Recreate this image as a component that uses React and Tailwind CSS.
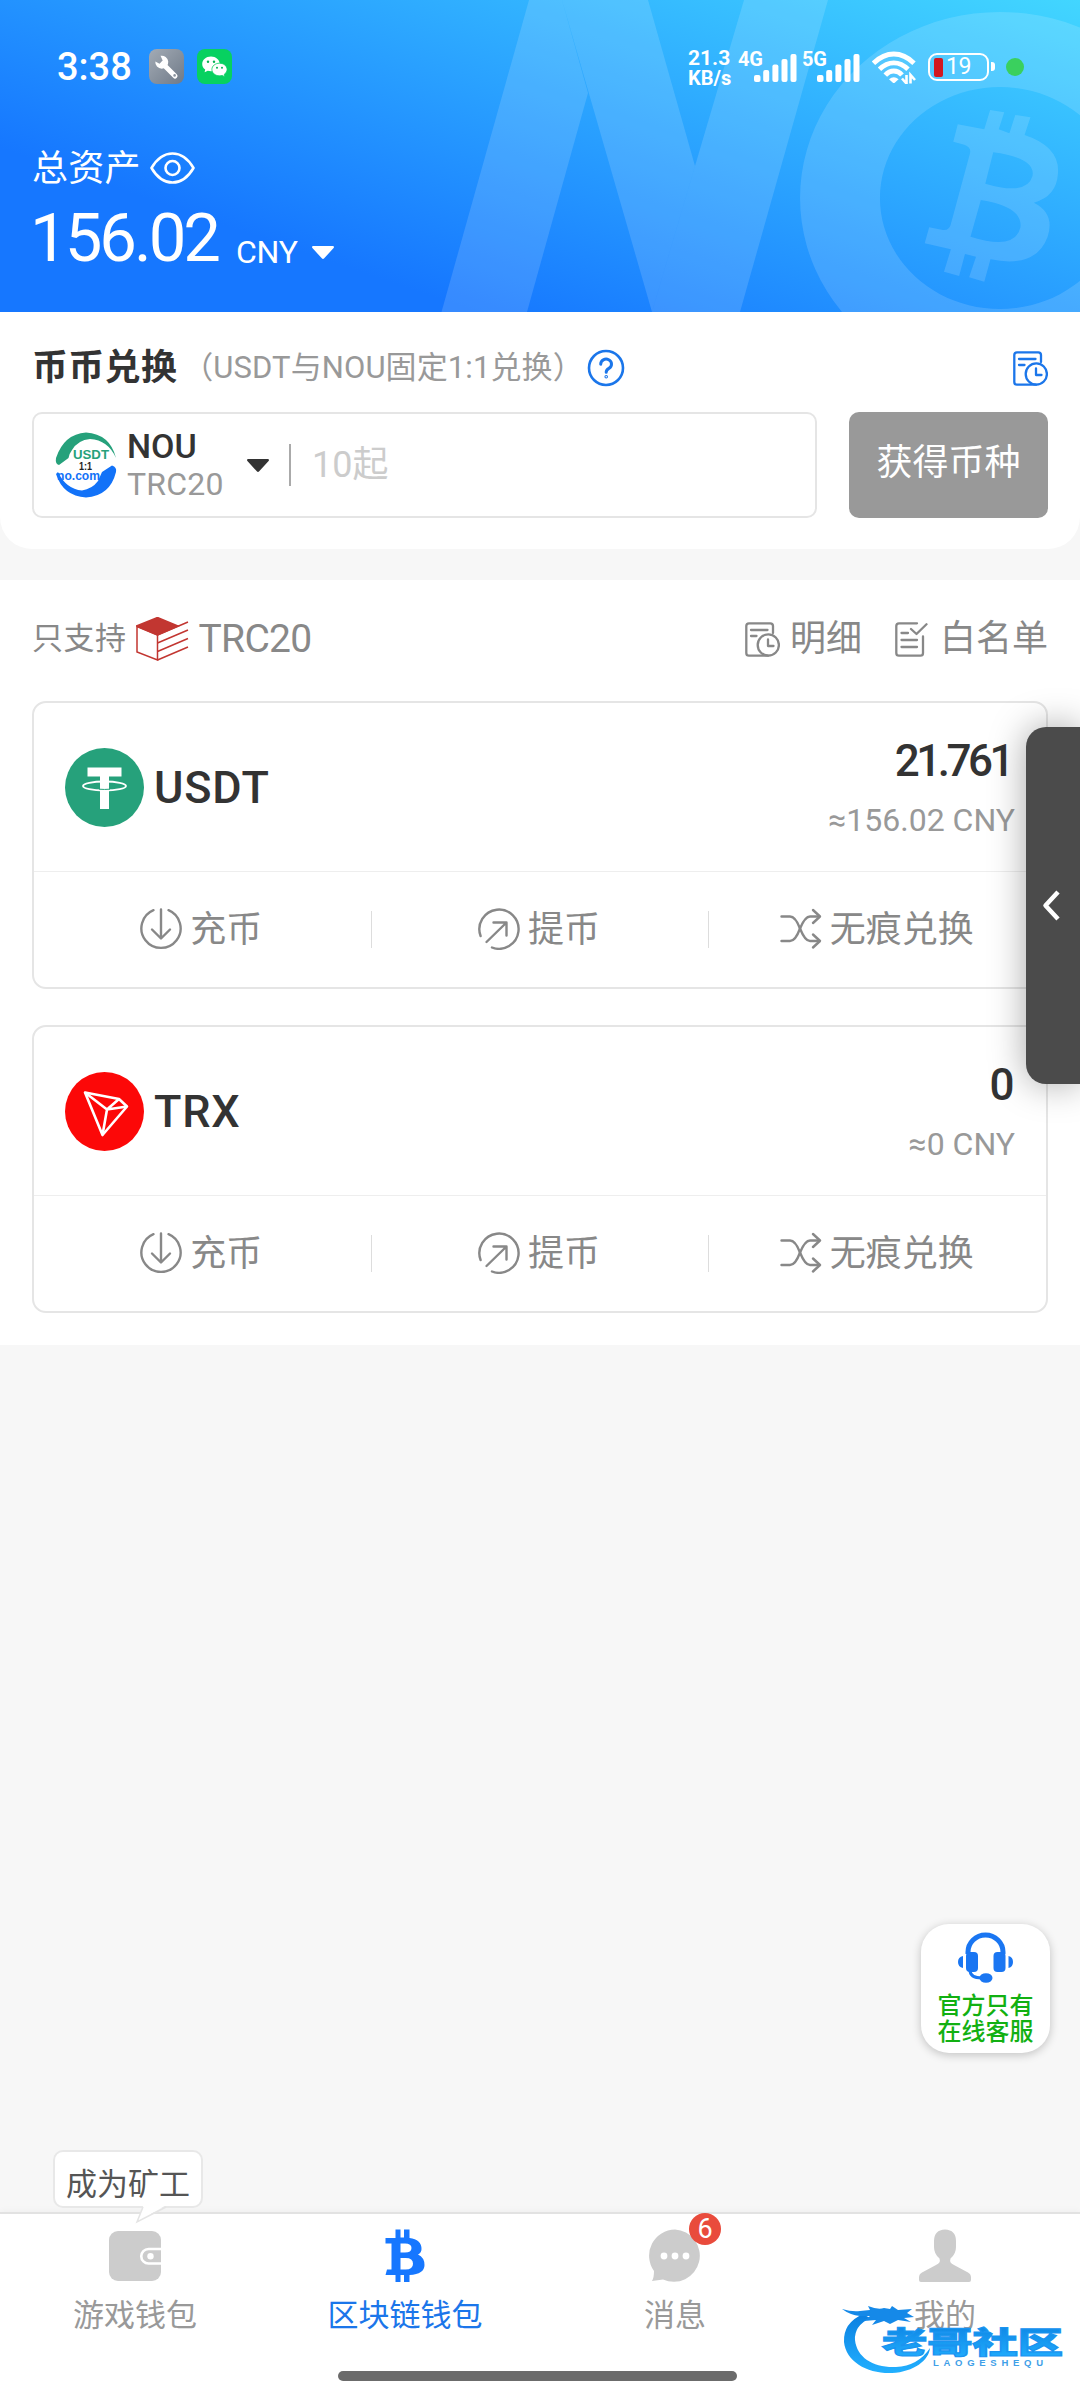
import React from "react";

const assets = [
  { name: "USDT", amount: "21.761", value: "≈156.02 CNY", icon: <UsdtLogo /> },
  { name: "TRX", amount: "0", value: "≈0 CNY", icon: <TrxLogo /> },
];

function CaretDown({ className }) {
  return (
    <svg className={className} viewBox="0 0 22 13" fill="currentColor">
      <path d="M1.2 0h19.6c1 0 1.500 1.200.8 2L12.200 12.300a1.600 1.600 0 0 1-2.400 0L.4 2C-.3 1.200.2 0 1.200 0z" />
    </svg>
  );
}

function HeroArt() {
  return (
    <svg className="absolute inset-0 w-full h-full" viewBox="0 0 1080 312" fill="#fff" fillOpacity="0.14">
      <path d="M529 0H562L588 93L527 312H441.500z" />
      <path d="M562 0H648L695 166L652 312z" />
      <path d="M744 0H828L740 312H652L695 166z" />
      <path
        fillRule="evenodd"
        d="M1000 12a200 186 0 1 0 .1 0zM1000 87a120 111 0 1 1-.1 0z"
      />
      <g transform="translate(540 0) scale(0.3444 0.3333)">
        <path
          fillRule="evenodd"
          d="M1213 373L1200 425L1232 434Q1254 442 1248 462L1194 668Q1190 692 1170 690L1130 682L1117 730L1193 748L1173 815L1217 828L1234 762L1266 770L1246 832L1290 845L1308 778Q1440 806 1474 710Q1496 640 1434 608Q1500 590 1504 520Q1510 440 1407 405L1424 352L1380 345L1363 400L1332 388L1348 337L1307 330L1290 388zM1316 457Q1440 474 1430 528Q1414 588 1293 551zM1280 600Q1402 620 1395 682Q1380 752 1250 710z"
        />
      </g>
    </svg>
  );
}

function SignalBars() {
  return (
    <svg className="w-[43px] h-[28px]" viewBox="0 0 43 28" fill="currentColor">
      <rect x="0" y="21" width="6.500" height="7" rx="2" />
      <rect x="9.200" y="16" width="6" height="12" rx="2" />
      <rect x="18.400" y="10.500" width="6" height="17.500" rx="2" />
      <rect x="27.500" y="5" width="6" height="23" rx="2" />
      <rect x="36.500" y="0" width="6" height="28" rx="2" />
    </svg>
  );
}

function StatusBar() {
  return (
    <div className="flex items-start h-[86px] pt-[49px] text-white">
      <span className="ml-[57px] w-[92px] h-[36px] leading-[37px] text-[38px] font-medium">3:38</span>
      <svg className="w-[35px] h-[35px]" viewBox="0 0 35 35">
        <defs>
          <linearGradient id="wrenchBg" x1="0" y1="0" x2="1" y2="1">
            <stop offset="0" stopColor="#a3abb5" />
            <stop offset="1" stopColor="#6f7a88" />
          </linearGradient>
        </defs>
        <rect width="35" height="35" rx="8" fill="url(#wrenchBg)" />
        <path d="M14 15L26 27" stroke="#fff" strokeWidth="5" strokeLinecap="round" />
        <path d="M11.500 6.800a6.500 6.500 0 1 1-5.200 5.800l4.200 2.200 3.200-3.200z" fill="#fff" />
        <circle cx="25.600" cy="26.400" r="1.300" fill="#8a939e" />
      </svg>
      <svg className="ml-[13px] w-[35px] h-[35px]" viewBox="0 0 35 35">
        <rect width="35" height="35" rx="8" fill="#07d160" />
        <path d="M14 7.500c-5 0-8.800 3.300-8.800 7.400 0 2.300 1.200 4.200 3 5.600l-.6 2.800 3.200-1.500c1 .3 2 .5 3.200.5 5 0 8.700-3.300 8.700-7.400S18.800 7.500 14 7.500z" fill="#fff" />
        <path d="M22.500 14.200c-4.300 0-7.600 2.800-7.600 6.300s3.300 6.300 7.600 6.300c1 0 1.900-.1 2.700-.4l2.600 1.300-.5-2.400c1.600-1.200 2.800-2.900 2.800-4.800 0-3.500-3.300-6.300-7.600-6.300z" fill="#fff" stroke="#07d160" strokeWidth="0.800" />
        <g fill="#07b354">
          <circle cx="11" cy="12.800" r="1.200" />
          <circle cx="17" cy="12.800" r="1.200" />
          <circle cx="20" cy="18.700" r="1" />
          <circle cx="25" cy="18.700" r="1" />
        </g>
      </svg>
      <div className="ml-[456px] w-[50px] flex flex-col text-[21px] leading-[19px] font-bold">
        <span>21.3</span>
        <span className="text-[20px] leading-[20px]">KB/s</span>
      </div>
      <span className="text-[20px] leading-[20px] font-bold tracking-[-0.300px] w-[16px] whitespace-nowrap">4G</span>
      <div className="mt-[5px]"><SignalBars /></div>
      <span className="ml-[5px] w-[15px] text-[20px] leading-[20px] font-bold tracking-[-0.300px] whitespace-nowrap">5G</span>
      <div className="mt-[5px]"><SignalBars /></div>
      <svg className="ml-[12px] mt-[2px] w-[44px] h-[33px]" viewBox="0 0 44 33" fill="none" stroke="currentColor" strokeWidth="4.800">
        <path d="M1.500 12.200Q11 3 21.800 3T42 12.200" />
        <path d="M7.500 18.300Q14 11.800 21.800 11.800T36 18.300" />
        <path d="M13.300 24.200Q17 20 21.800 20T30 24" />
        <path d="M17 28.200q4.800-4 9.600 0L23 31.600q-1.200 1-2.400 0z" fill="currentColor" stroke="none" />
        <path d="M34.500 24v8.500L30 27.500M38.500 32.500V24l4.500 5" strokeWidth="2.600" />
      </svg>
      <div className="ml-[12px] mt-[4px] w-[61px] h-[28px] rounded-[9px] border-[2.500px] border-white flex items-center pl-[4px]">
        <div className="w-[9px] h-[19px] rounded-[2px] bg-[#d2171f]"></div>
        <span className="ml-[3px] text-[23px] leading-[22px] tracking-[-0.500px]">19</span>
      </div>
      <div className="ml-[2px] mt-[13px] w-[4px] h-[9px] rounded-r-[3px] bg-white"></div>
      <div className="ml-[11px] mt-[9px] w-[18px] h-[18px] rounded-full bg-[#3ad05e]"></div>
    </div>
  );
}

function Hero() {
  return (
    <div className="relative h-[312px] bg-[linear-gradient(19deg,#1677ff_24%,#42d6ff_100%)] text-white">
      <HeroArt />
      <div className="relative">
        <StatusBar />
        <div className="flex items-center h-[50px] mt-[57px] pl-8">
          <span className="mt-[2px] text-[36px] leading-[50px] tracking-[0.300px]">总资产</span>
          <svg className="ml-[9px] w-[45px] h-[32px]" viewBox="0 0 45 32" fill="none" stroke="currentColor" strokeWidth="2.600">
            <path d="M1.500 16Q10 1.500 22.500 1.500T43.500 16Q35 30.500 22.500 30.500T1.500 16z" strokeLinejoin="round" />
            <circle cx="22.500" cy="16" r="7" />
          </svg>
        </div>
        <div className="flex items-end pl-[30px] mt-[8px] h-[75px]">
          <span className="text-[67px] leading-[75px] tracking-[-3px]">156.02</span>
          <span className="ml-[18px] mb-[8px] text-[32px] leading-[32px] tracking-[-0.200px]">CNY</span>
          <CaretDown className="ml-[14px] mb-[17px] w-[22px] h-[13px]" />
        </div>
      </div>
    </div>
  );
}

function RecordIcon({ className }) {
  return (
    <svg className={className} viewBox="0 0 35 35" fill="none" stroke="currentColor" strokeWidth="2.300" strokeLinecap="round" strokeLinejoin="round">
      <path d="M28 11V4q0-2.700-2.700-2.700H4Q1.300 1.300 1.300 4v27q0 2.700 2.700 2.700H23" />
      <path d="M6 8h16.500M6 14h5.500" />
      <circle cx="23.300" cy="23" r="10.600" />
      <path d="M23 17.500V24h5.500" />
    </svg>
  );
}

function WhitelistIcon() {
  return (
    <svg className="w-[33px] h-[35px]" viewBox="0 0 33 35" fill="none" stroke="currentColor" strokeWidth="2.300" strokeLinecap="round" strokeLinejoin="round">
      <path d="M22 1.300H4Q1.300 1.300 1.300 4v27q0 2.700 2.700 2.700H25.500q2.500 0 2.500-2.700V14.500" />
      <path d="M6.500 11H13M6.500 18H22M6.500 25H22" />
      <path d="M16 7l5.500 5L31.500 2.200" />
    </svg>
  );
}

function NouLogo() {
  return (
    <svg className="w-[64px] h-[66px]" viewBox="0 0 64 66">
      <path d="M2 26Q10 2 32 0.500Q56 2 62 26Q54 8 36 7Q24 8 18 18Q15 22 14.500 26L5 33Q1 32 2 26z" fill="#26a17b" />
      <path d="M62 40Q56 64 32 65.500Q9 64 2 42L4 40Q12 57 28 58.500Q38 57 44 49L48 40L58 33.500Q63 35 62 40z" fill="#1272f8" />
      <text x="19" y="27" textLength="36" lengthAdjust="spacingAndGlyphs" className="font-['Liberation_Sans'] font-bold text-[13px]" fill="#26a17b">USDT</text>
      <text x="25" y="37.500" textLength="13" lengthAdjust="spacingAndGlyphs" className="font-['Liberation_Sans'] font-bold text-[10px]" fill="#222">1:1</text>
      <text x="3" y="48" textLength="43" lengthAdjust="spacingAndGlyphs" className="font-['Liberation_Sans'] font-bold text-[13px]" fill="#1272f8">no.com</text>
    </svg>
  );
}

function ExchangePanel() {
  return (
    <div className="h-[237px] bg-white rounded-b-[32px] px-8">
      <div className="flex items-center h-[100px] pt-[12px]">
        <span className="text-[36px] leading-[50px] font-bold text-[#333] tracking-[0.300px]">币币兑换</span>
        <span className="ml-[5px] text-[31px] leading-[44px] text-[#999] tracking-[0.100px] whitespace-nowrap">（USDT与NOU固定1:1兑换）</span>
        <svg className="ml-[3px] w-[38px] h-[38px] text-[#1b76ea]" viewBox="0 0 38 38" fill="none" stroke="currentColor" strokeWidth="2.600" strokeLinecap="round">
          <circle cx="19" cy="19" r="17" />
          <path d="M13.700 15.200a5.400 5 0 1 1 8.200 4.200Q19.200 21 19.200 23.200" strokeWidth="3" />
          <circle cx="19.200" cy="27.800" r="0.500" />
        </svg>
        <RecordIcon className="ml-auto w-[35px] h-[35px] text-[#1b76ea]" />
      </div>
      <div className="flex gap-8">
        <div className="flex items-center w-[785px] h-[106px] rounded-[10px] border-2 border-[#e5e5e5] pl-[20px]">
          <NouLogo />
          <div className="ml-[9px] w-[120px] flex flex-col">
            <span className="text-[34px] leading-[38px] font-medium text-[#333]">NOU</span>
            <span className="text-[32px] leading-[38px] text-[#999] tracking-[0.200px]">TRC20</span>
          </div>
          <CaretDown className="w-[22px] h-[13px] text-[#333]" />
          <div className="ml-[20px] w-[2px] h-[42px] bg-[#aaa]"></div>
          <span className="ml-[21px] text-[36px] leading-[50px] text-[#ccc]">10起</span>
        </div>
        <button className="flex-1 h-[106px] rounded-[10px] bg-[#999] pb-[5px] text-white text-[36px] leading-[50px]">获得币种</button>
      </div>
    </div>
  );
}

function UsdtLogo() {
  return (
    <svg className="w-[79px] h-[79px]" viewBox="0 0 79 79">
      <circle cx="39.500" cy="39.500" r="39.500" fill="#26a17b" />
      <path d="M22.500 19.500H56.500V28.500H44V61H35V28.500H22.500z" fill="#fff" />
      <ellipse cx="39.500" cy="38" rx="21.500" ry="4.500" fill="none" stroke="#fff" strokeWidth="1.800" />
      <path d="M34 41.200q5.500.5 11 0" stroke="#26a17b" strokeWidth="1" fill="none" />
    </svg>
  );
}

function TrxLogo() {
  return (
    <svg className="w-[79px] h-[79px]" viewBox="0 0 79 79">
      <circle cx="39.500" cy="39.500" r="39.500" fill="#fc0808" />
      <g fill="none" stroke="#fff" strokeWidth="2.600" strokeLinejoin="round">
        <path d="M20 20.500L54 27L62 34.500L37.500 63z" />
        <path d="M20 20.500L42 37.500L37.500 63M42 37.500L54 27M42 37.500L62 34.500" />
      </g>
    </svg>
  );
}

function Action({ icon, label }) {
  return (
    <div className="flex-1 flex items-center justify-center gap-[8px] h-full pr-[2px] pb-[1px]">
      {icon}
      <span className="mt-[2px] text-[36px] leading-[50px] text-[#888]">{label}</span>
    </div>
  );
}

function DepositIcon() {
  return (
    <svg className="w-[42px] h-[42px] text-[#888]" viewBox="0 0 42 42" fill="none" stroke="currentColor" strokeWidth="2.400" strokeLinecap="round" strokeLinejoin="round">
      <path d="M13.500 2.200A19.600 19.600 0 1 0 28.500 2.200" />
      <path d="M21 1.500V30M12 21.500L21 30.500L30 21.500" />
    </svg>
  );
}

function WithdrawIcon() {
  return (
    <svg className="w-[42px] h-[42px] text-[#888]" viewBox="0 0 42 42" fill="none" stroke="currentColor" strokeWidth="2.400" strokeLinecap="round" strokeLinejoin="round">
      <path d="M2.600 28A19.600 19.600 0 1 1 14 39.500" />
      <path d="M8.500 34L28 15M15.500 14.500H28.500V27.500" />
    </svg>
  );
}

function ShuffleIcon() {
  return (
    <svg className="w-[42px] h-[42px] text-[#888]" viewBox="0 0 42 42" fill="none" stroke="currentColor" strokeWidth="2.400" strokeLinecap="round" strokeLinejoin="round">
      <path d="M1.500 8.500H10Q15.500 8.500 20 20.500Q25 33 30 33H39" />
      <path d="M1.500 33H10Q15.500 33 20 20.500Q25 8.500 30 8.500H39" />
      <path d="M33 2L40 8.500L33 15M33 26.500L40 33L33 39.500" />
    </svg>
  );
}

function AssetCard({ asset }) {
  return (
    <div className="h-[288px] rounded-[14px] border-2 border-[#e5e5e5]">
      <div className="flex items-start justify-between h-[169px] border-b border-[#eee] pl-[31px] pr-[31px]">
        <div className="flex items-center pt-[45px]">
          {asset.icon}
          <span className="ml-[10px] text-[45px] leading-[54px] font-medium text-[#333] tracking-[0.800px]">{asset.name}</span>
        </div>
        <div className="flex flex-col items-end">
          <span className="mt-[31px] mr-[4px] text-[44px] leading-[54px] font-medium text-[#333] tracking-[-3.500px]">{asset.amount}</span>
          <span className="mt-[10px] text-[32px] leading-[44px] text-[#999]">{asset.value}</span>
        </div>
      </div>
      <div className="flex items-center h-[115px]">
        <Action icon={<DepositIcon />} label="充币" />
        <div className="w-px h-[37px] bg-[#ddd]"></div>
        <Action icon={<WithdrawIcon />} label="提币" />
        <div className="w-px h-[37px] bg-[#ddd]"></div>
        <Action icon={<ShuffleIcon />} label="无痕兑换" />
      </div>
    </div>
  );
}

function AssetSection() {
  return (
    <div className="mt-[31px] h-[765px] bg-white px-8">
      <div className="flex items-center h-[121px] text-[#888] pb-[3px]">
        <span className="text-[31px] leading-[44px] tracking-[0.500px]">只支持</span>
        <svg className="ml-[9px] w-[53px] h-[44px]" viewBox="0 0 53 44" fill="none" stroke="#c23631" strokeWidth="1.500">
          <path d="M0.500 9L21.500 0.500L42 9L21.500 18z" fill="#c23631" />
          <path d="M1 9.500V35L21.500 43V18z" />
          <path d="M21.500 18L52 5M21.500 26L52 13M21.500 34.500L52 21.500M21.500 43L52 30" />
        </svg>
        <span className="ml-[10px] text-[39px] leading-[44px] tracking-[-0.700px]">TRC20</span>
        <RecordIcon className="ml-auto w-[35px] h-[35px]" />
        <span className="ml-[10px] text-[36px] leading-[50px]">明细</span>
        <span className="w-[33px]"></span>
        <WhitelistIcon />
        <span className="ml-[12px] text-[36px] leading-[50px]">白名单</span>
      </div>
      <div className="flex flex-col gap-9">
        {assets.map((asset) => (
          <AssetCard key={asset.name} asset={asset} />
        ))}
      </div>
    </div>
  );
}

function SideHandle() {
  return (
    <div className="absolute right-0 top-[727px] w-[54px] h-[357px] rounded-l-[20px] bg-[#4b4b4b] shadow-[0_0_36px_rgba(0,0,0,0.35)]">
      <svg className="absolute left-[16px] top-[163px] w-[20px] h-[31px]" viewBox="0 0 20 31" fill="none" stroke="#fff" strokeWidth="4.500" strokeLinejoin="round">
        <path d="M16 2L3.500 15.500L16 29" />
      </svg>
    </div>
  );
}

function SupportButton() {
  return (
    <div className="absolute left-[921px] top-[1924px] w-[129px] h-[129px] rounded-[28px] bg-white shadow-[0_2px_10px_rgba(0,0,0,0.22)] flex flex-col items-center">
      <svg className="mt-[8px] w-[55px] h-[51px]" viewBox="0 0 55 51" fill="#1a76f2">
        <path d="M10 22V20A17.500 17 0 0 1 45 20V22" fill="none" stroke="#1a76f2" strokeWidth="5" />
        <rect x="8" y="20" width="12" height="20" rx="4" />
        <rect x="35.500" y="20" width="12" height="20" rx="4" />
        <path d="M5 24v12q-5-1-5-6t5-6zM50.500 24v12q4.500-1 4.500-6t-4.500-6z" />
        <path d="M12 38Q12 46 24 46" fill="none" stroke="#1a76f2" strokeWidth="3" />
        <ellipse cx="28" cy="46" rx="6.500" ry="4.800" />
      </svg>
      <div className="mt-[10px] flex flex-col text-[24px] leading-[26px] font-medium text-[#12b012]">
        <span>官方只有</span>
        <span>在线客服</span>
      </div>
    </div>
  );
}

function MinerTip() {
  return (
    <div className="absolute left-[53px] top-[2150px] w-[150px] h-[58px] rounded-[10px] border-2 border-[#e8e8e8] bg-white">
      <span className="block pt-[2px] text-center text-[31px] leading-[62px] text-[#555] whitespace-nowrap">成为矿工</span>
      <svg className="absolute left-[80px] top-[52px] w-[36px] h-[20px]" viewBox="0 0 36 20">
        <path d="M9 0L2 18L33 0z" fill="#fff" />
        <path d="M8 3L2 18L31 3" fill="none" stroke="#e4e4e4" strokeWidth="1.500" />
      </svg>
    </div>
  );
}

function Tab({ icon, label, active }) {
  return (
    <div className={active ? "flex-1 flex flex-col items-center text-[#1b76ea]" : "flex-1 flex flex-col items-center text-[#999]"}>
      <div className="relative mt-[15px] h-[54px]">{icon}</div>
      <span className="mt-[11px] text-[31px] leading-[44px]">{label}</span>
    </div>
  );
}

function TabBar() {
  return (
    <div className="absolute left-0 top-[2212px] w-full h-[188px] bg-white border-t-2 border-[#e2e2e2] shadow-[0_-2px_6px_rgba(0,0,0,0.03)] flex flex-col items-center">
      <div className="flex w-full h-[157px]">
        <Tab
          label="游戏钱包"
          icon={
            <svg className="w-[52px] h-[54px]" viewBox="0 0 52 54">
              <rect y="2" width="52" height="50" rx="9" fill="#ccc" />
              <path d="M53 20H39.500a7 7 0 0 0 0 14.500H53" fill="none" stroke="#fff" strokeWidth="2.600" />
              <circle cx="41.500" cy="27.200" r="3.200" fill="#fff" />
            </svg>
          }
        />
        <Tab
          active
          label="区块链钱包"
          icon={
            <svg className="w-[40px] h-[54px]" viewBox="0 0 40 54" fill="#1677ff">
              <path
                fillRule="evenodd"
                d="M10.500 0.500H15.500V8.500H19V0.500H24.500V9Q36.500 10.500 36.500 20Q36.500 23.500 33 25.500Q39.500 28.500 39.500 36Q39.500 45 24.500 46V53H19V46H15.500V53H10.500V46H0.500L2 40.500H6.500V14.500H0.500V9H10.500zM15.500 14.500V23.500H20Q26.500 23.500 26.500 19T20 14.500zM15.500 29V40.500H20.500Q28 40.500 28 34.700T20.500 29z"
              />
            </svg>
          }
        />
        <Tab
          label="消息"
          icon={
            <>
              <svg className="w-[52px] h-[54px]" viewBox="0 0 52 54">
                <path d="M26 0.500A26 26.200 0 1 1 14 50.500L3 52Q5 49 5 42A26 26.200 0 0 1 26 .5z" fill="#ccc" />
                <g fill="#fff">
                  <circle cx="15" cy="27" r="3.400" />
                  <circle cx="26" cy="27" r="3.400" />
                  <circle cx="37" cy="27" r="3.400" />
                </g>
              </svg>
              <span className="absolute left-[40px] top-[-16px] w-[32px] h-[32px] rounded-full bg-[#e94b3c] text-white text-[27px] leading-[32px] text-center">6</span>
            </>
          }
        />
        <Tab
          label="我的"
          icon={
            <svg className="w-[52px] h-[54px]" viewBox="0 0 52 54" fill="#ccc">
              <path d="M26 0.500Q37 1 37 12V18Q37 25 31.500 29.500Q30 34 35 36L49 43.500Q52 45 52 48.500V51Q52 53 50 53H2Q0 53 0 51V48.500Q0 45 3 43.500L17 36Q22 34 20.500 29.500Q15 25 15 18V12Q15 1 26 .5z" />
            </svg>
          }
        />
      </div>
      <div className="mr-[6px] w-[399px] h-[10px] rounded-full bg-[#6b6b6b]"></div>
    </div>
  );
}

function Watermark() {
  return (
    <svg className="absolute left-[830px] top-[2290px] w-[240px] h-[95px]" viewBox="0 0 240 95">
      <defs>
        <linearGradient id="wmark" x1="0" y1="0" x2="0" y2="1">
          <stop offset="0" stopColor="#0b7fe0" />
          <stop offset="1" stopColor="#22b0ff" />
        </linearGradient>
      </defs>
      <path
        d="M33 24Q13 33 14 52C16 72 38 84 62 83C84 82 99 70 100 58Q88 76 66 77C44 78 27 68 25 50Q24 36 40 28z"
        fill="url(#wmark)"
      />
      <path
        d="M12 19Q22 22 30 21L40 20L38 16Q48 20 54 18L60 19L62 16L68 20L82 19L77 23L84 27L74 28L81 32L68 30L60 34L54 31L42 35L46 30L34 31L40 26L30 26Q20 25 12 19z"
        fill="#1589e8"
      />
      <text x="52" y="63" textLength="181" lengthAdjust="spacingAndGlyphs" className="font-['Noto_Sans_CJK_SC'] font-black text-[30px]" fill="url(#wmark)" stroke="#1a94f0" strokeWidth="1.200">老哥社区</text>
      <text x="103" y="76" textLength="110" className="font-['Liberation_Sans'] font-bold text-[9.500px]" fill="#3fa0e8">LAOGESHEQU</text>
    </svg>
  );
}

export default function App() {
  return (
    <div className="relative w-[1080px] h-[2400px] overflow-hidden bg-[#f7f7f7] font-['Roboto','Noto_Sans_CJK_SC',sans-serif]">
      <Hero />
      <ExchangePanel />
      <AssetSection />
      <SideHandle />
      <SupportButton />
      <TabBar />
      <MinerTip />
      <Watermark />
    </div>
  );
}
